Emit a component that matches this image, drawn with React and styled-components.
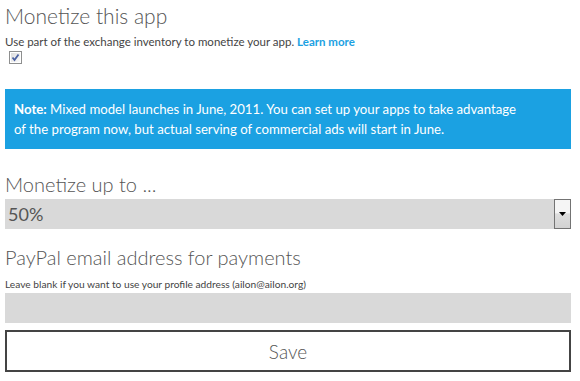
import React from 'react'
import styled, { createGlobalStyle } from 'styled-components'

const Global = createGlobalStyle`
  body {
    margin: 0;
    background: #fff;
    font-family: Lato, 'Open Sans', 'Liberation Sans', sans-serif;
    color: #444;
  }
`

const App = () => (
  <>
    <Global />
    <Page>
      <Title>Monetize this app</Title>
      <Hint top={5} size={11.5}>
        Use part of the exchange inventory to monetize your app.{' '}
        <Link href='#'>Learn more</Link>
      </Hint>
      <Check>
        <svg width='13' height='13' viewBox='0 0 13 13'>
          <defs>
            <linearGradient id='cb' x1='0' y1='0' x2='1' y2='1'>
              <stop offset='0' stopColor='#dcdcdc' />
              <stop offset='1' stopColor='#fbfbfb' />
            </linearGradient>
          </defs>
          <rect x='0.5' y='0.5' width='12' height='12' fill='#fff' stroke='#8e8f8f' />
          <rect x='2' y='2' width='9' height='9' fill='url(#cb)' />
          <path d='M3.5 6.5 L5.5 9 L9.5 3.5' fill='none' stroke='#4b61a1' strokeWidth='1.8' />
        </svg>
      </Check>

      <Note>
        <b>Note:</b> Mixed model launches in June, 2011. You can set up your apps to take advantage
        <br />
        of the program now, but actual serving of commercial ads will start in June.
      </Note>

      <Label top={23}>Monetize up to ...</Label>
      <Select>
        <Value>50%</Value>
        <Arrow>
          <svg width='7' height='4' viewBox='0 0 7 4'>
            <path d='M0 0 H7 L3.5 4 Z' fill='#000' />
          </svg>
        </Arrow>
      </Select>

      <Label top={16}>PayPal email address for payments</Label>
      <Hint top={8} size={10.2}>
        Leave blank if you want to use your profile address (ailon@ailon.org)
      </Hint>
      <Input />
      <Button>Save</Button>
    </Page>
  </>
)

const Page = styled.div`
  width: 566px;
  padding: 2px 9px 0 5px;
  display: flex;
  flex-direction: column;
`

const Title = styled.h2`
  margin: 0;
  font-size: 21px;
  font-weight: 300;
  line-height: 28px;
  color: #555;
`

const Label = styled.div`
  margin-top: ${(p) => p.top}px;
  font-size: 20px;
  font-weight: 300;
  line-height: 24px;
  color: #555;
`

const Hint = styled.div`
  margin-top: ${(p) => p.top}px;
  font-size: ${(p) => p.size}px;
  line-height: 14px;
  color: #444;
`

const Link = styled.a`
  color: #1ba1e2;
  font-weight: 700;
  text-decoration: none;
`

const Check = styled.div`
  margin: 2px 0 0 4px;
  height: 13px;
  display: flex;
`

const Note = styled.div`
  margin-top: 25px;
  height: 60px;
  box-sizing: border-box;
  padding: 10px 9px;
  background: #1ba1e2;
  color: #fff;
  font-size: 13.2px;
  line-height: 20px;
  font-weight: 400;
  white-space: nowrap;

  b {
    font-weight: 700;
  }
`

const Select = styled.div`
  margin-top: 3px;
  height: 30px;
  background: #d9d9d9;
  display: flex;
  justify-content: space-between;
  align-items: stretch;
`

const Value = styled.span`
  padding-left: 3px;
  font-size: 18px;
  font-weight: 400;
  line-height: 30px;
  color: #555;
`

const Arrow = styled.div`
  width: 15px;
  border: 1px solid #737373;
  background: linear-gradient(#f5f5f5 0%, #f5f5f5 45%, #dedede 50%, #d2d2d2 100%);
  display: flex;
  justify-content: center;
  padding-top: 12px;
  box-sizing: content-box;
  height: 16px;
`

const Input = styled.div`
  margin-top: 2px;
  height: 30px;
  background: #d9d9d9;
`

const Button = styled.button`
  margin-top: 7px;
  height: 42px;
  border: 2px solid #444;
  background: #fff;
  font-family: Lato, 'Open Sans', 'Liberation Sans', sans-serif;
  font-size: 19px;
  font-weight: 300;
  color: #555;
  padding: 0;
`

export default App
